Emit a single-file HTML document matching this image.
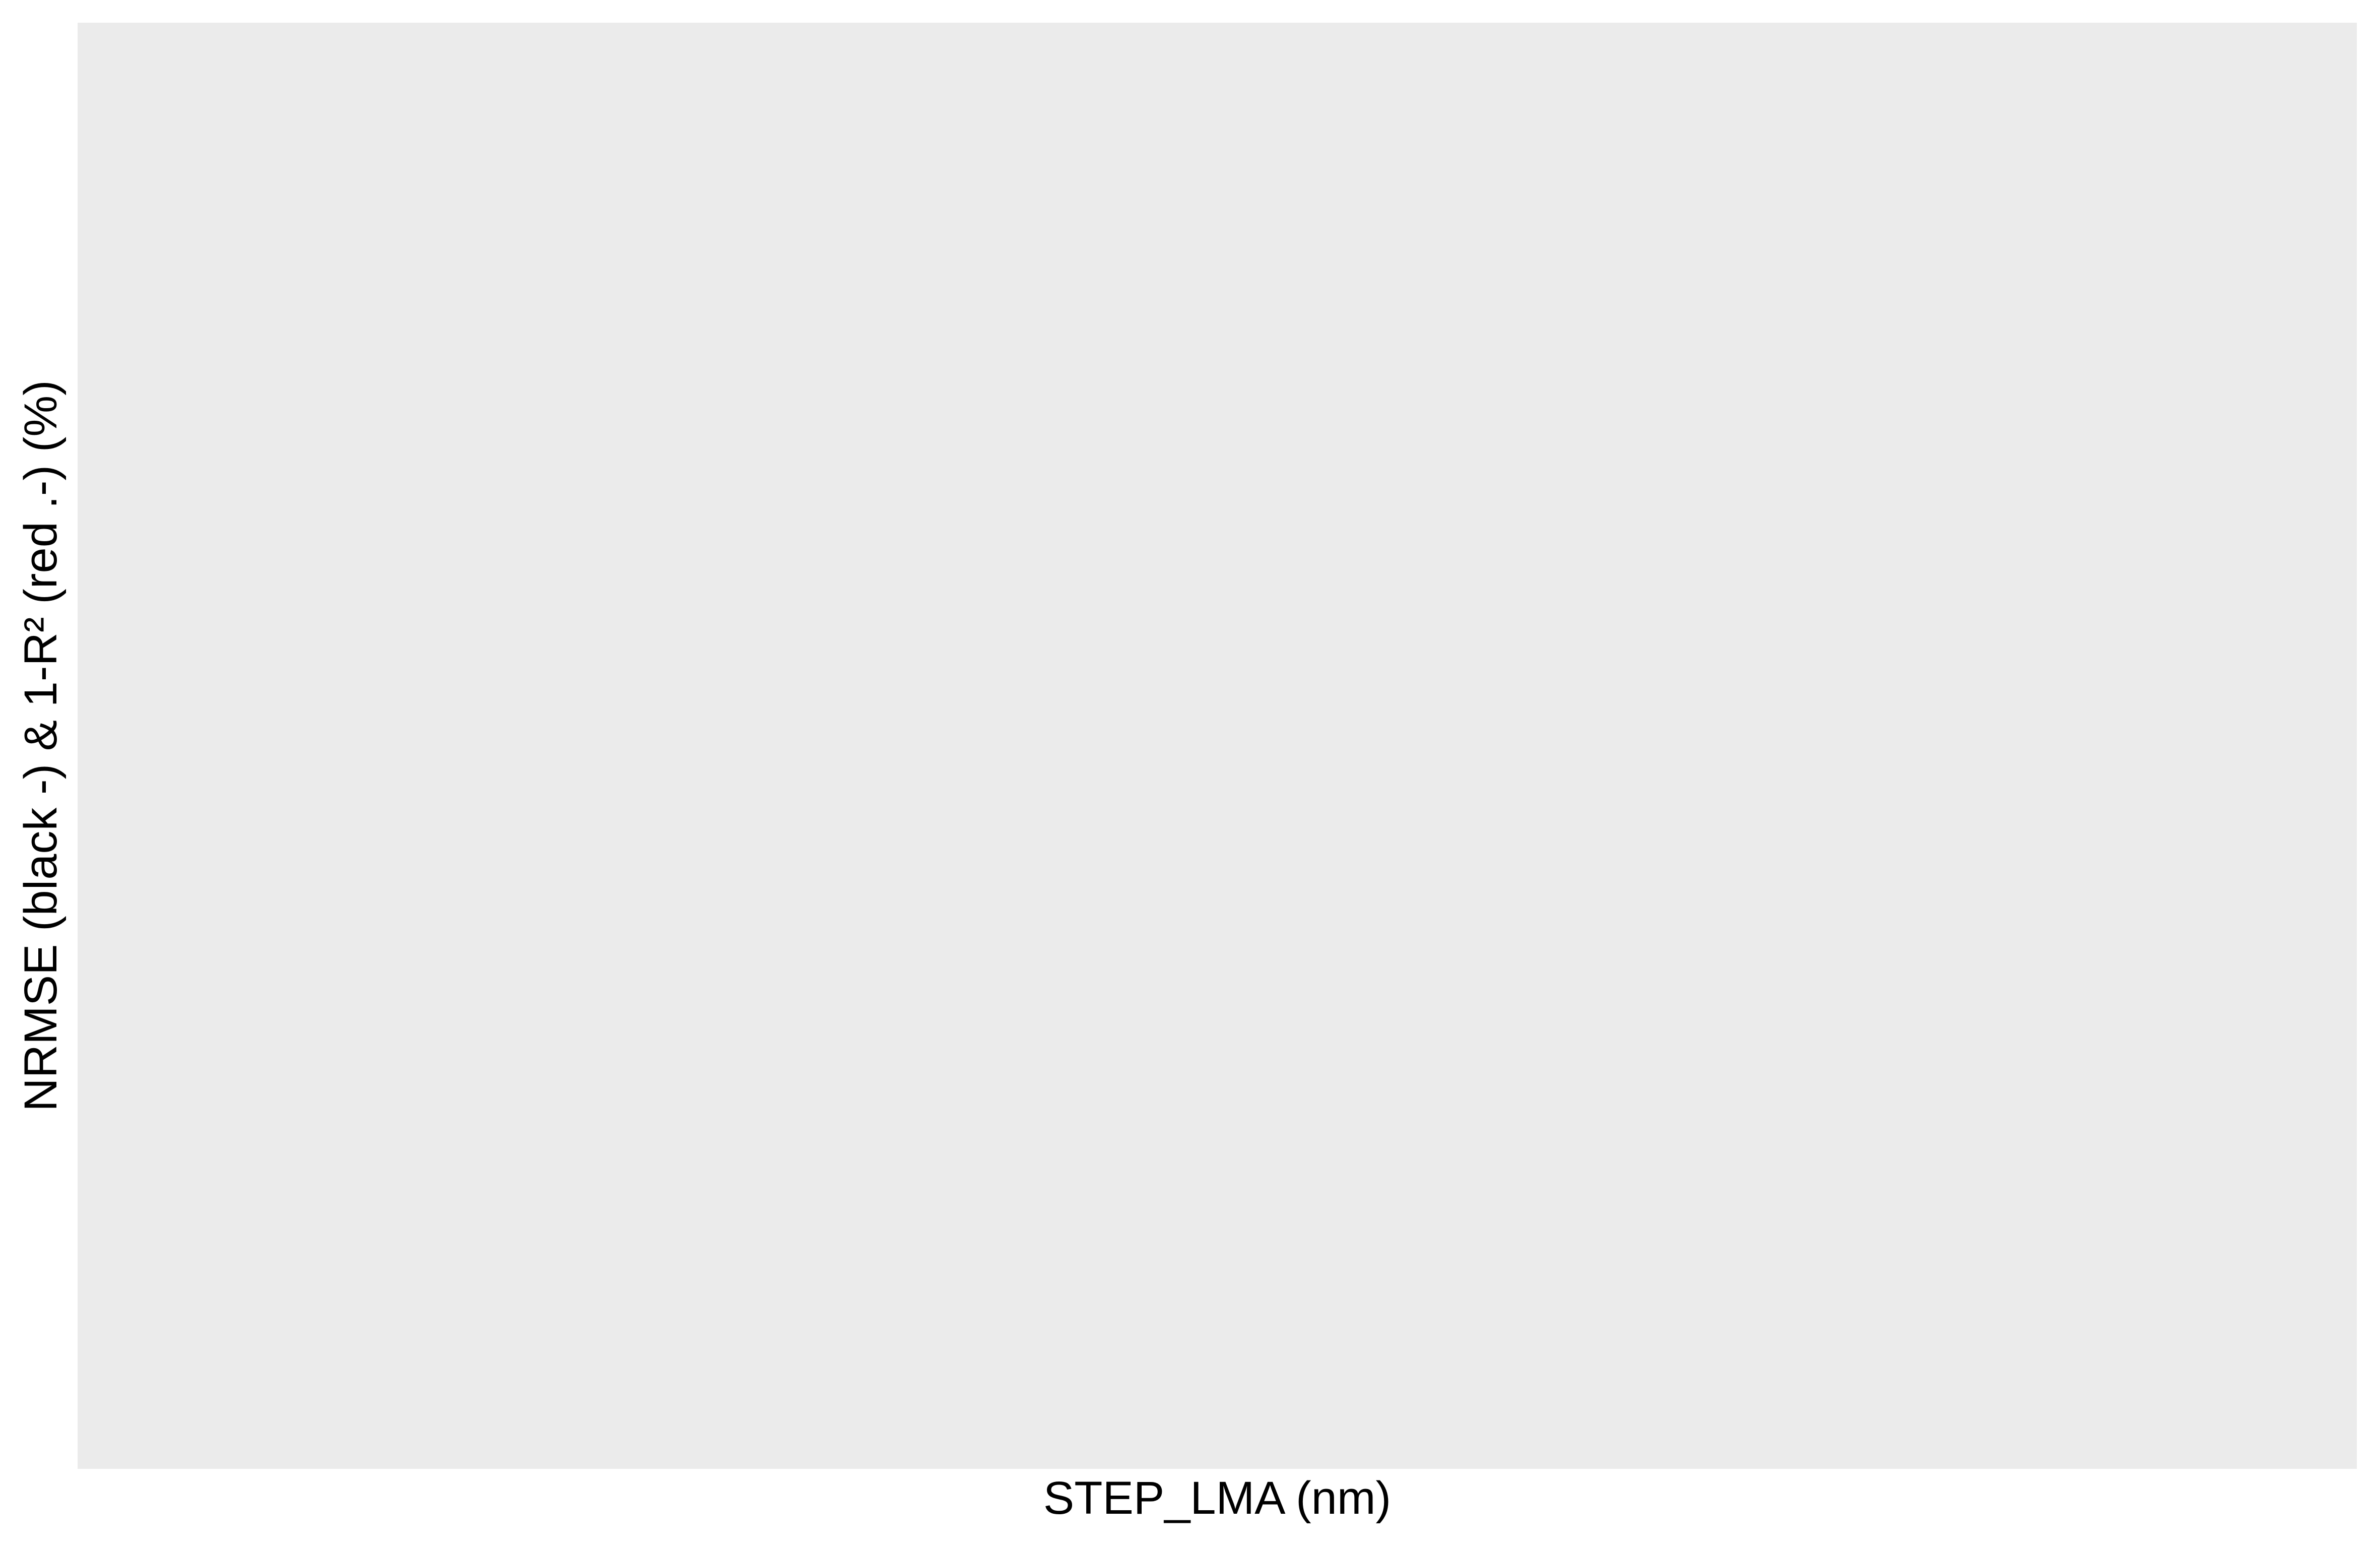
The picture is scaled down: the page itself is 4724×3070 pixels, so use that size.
<!DOCTYPE html>
<html><head><meta charset="utf-8"><style>
html,body{margin:0;padding:0;background:#fff;}
body{width:4724px;height:3070px;position:relative;overflow:hidden;font-family:"Liberation Sans",Arial,sans-serif;}
.panel{position:absolute;left:154px;top:45px;width:4524px;height:2870px;background:#ebebeb;}
.xl{position:absolute;left:0;width:4832px;top:2918px;text-align:center;font-size:92px;line-height:110px;color:#000;white-space:nowrap;}
.yl{position:absolute;left:112px;top:1480px;width:0;height:0;}
.yl span{position:absolute;transform:translate(-50%,0) rotate(-90deg);transform-origin:50% 0;white-space:nowrap;font-size:92px;line-height:1;color:#000;}
</style></head><body>
<div class="panel"></div>
<div class="xl">STEP_LMA (nm)</div>
<svg style="position:absolute;left:0;top:0" width="4724" height="3070">
<text x="112" y="1480" transform="rotate(-90 112 1480)" text-anchor="middle" font-family="Liberation Sans, Arial, sans-serif" font-size="92" fill="#000">NRMSE (black -) &amp; 1-R² (red .-) (%)</text>
</svg>
</body></html>
